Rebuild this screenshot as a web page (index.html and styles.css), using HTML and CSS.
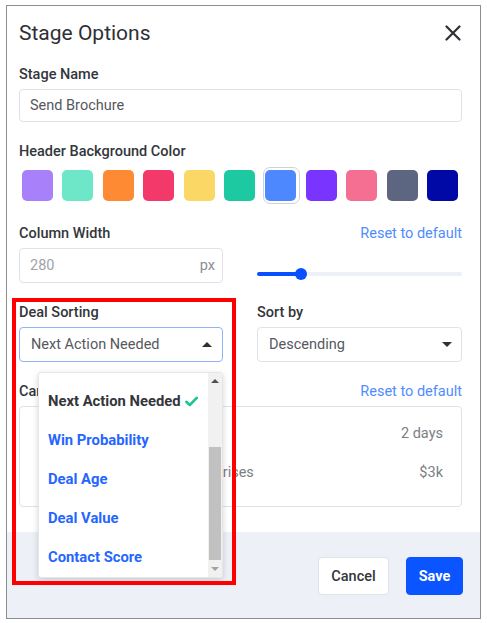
FILE: index.html
```html
<!DOCTYPE html>
<html>
<head>
<meta charset="utf-8">
<link rel="stylesheet" href="styles.css">
</head>
<body>
<div class="frame">
  <div class="modal-body">
    <div class="head">
      <h1 class="title">Stage Options</h1>
      <span class="close">
        <svg width="16" height="16" viewBox="0 0 16 16"><path d="M1.5 1.5 L14.5 14.5 M14.5 1.5 L1.5 14.5" stroke="#2e3035" stroke-width="2.2" stroke-linecap="round" fill="none"/></svg>
      </span>
    </div>

    <div class="field first">
      <div class="label">Stage Name</div>
      <div class="input">Send Brochure</div>
    </div>

    <div class="field">
      <div class="label">Header Background Color</div>
      <div class="swatches">
        <span class="sw"><span class="chip c1"></span></span>
        <span class="sw"><span class="chip c2"></span></span>
        <span class="sw"><span class="chip c3"></span></span>
        <span class="sw"><span class="chip c4"></span></span>
        <span class="sw"><span class="chip c5"></span></span>
        <span class="sw"><span class="chip c6"></span></span>
        <span class="sw selected"><span class="chip c7"></span></span>
        <span class="sw"><span class="chip c8"></span></span>
        <span class="sw"><span class="chip c9"></span></span>
        <span class="sw"><span class="chip c10"></span></span>
        <span class="sw"><span class="chip c11"></span></span>
      </div>
    </div>

    <div class="field">
      <div class="label-row">
        <span class="label">Column Width</span>
        <span class="link">Reset to default</span>
      </div>
      <div class="two-col">
        <div class="input input-px"><span class="placeholder">280</span><span class="unit">px</span></div>
        <div class="slider">
          <div class="track"><div class="fill"></div><div class="thumb"></div></div>
        </div>
      </div>
    </div>

    <div class="field two-col">
      <div class="sub">
        <div class="label">Deal Sorting</div>
        <div class="select focus"><span>Next Action Needed</span><span class="caret up"></span></div>
        <div class="menu">
          <ul class="menu-list">
            <li class="item current">Next Action Needed
              <svg class="check" width="13" height="11" viewBox="0 0 13 11"><path d="M1.3 5.8 L4.8 9 L11.7 1.8" stroke="#22c38e" stroke-width="2.6" fill="none" stroke-linecap="round" stroke-linejoin="round"/></svg>
            </li>
            <li class="item">Win Probability</li>
            <li class="item">Deal Age</li>
            <li class="item">Deal Value</li>
            <li class="item">Contact Score</li>
          </ul>
          <div class="scrollbar">
            <span class="sb-btn"><span class="sb-arrow up"></span></span>
            <span class="sb-space"></span>
            <span class="sb-thumb"></span>
            <span class="sb-fill"></span>
            <span class="sb-btn"><span class="sb-arrow down"></span></span>
          </div>
        </div>
      </div>
      <div class="sub">
        <div class="label">Sort by</div>
        <div class="select"><span>Descending</span><span class="caret down"></span></div>
      </div>
    </div>

    <div class="field">
      <div class="label-row">
        <span class="label">Card Preview</span>
        <span class="link">Reset to default</span>
      </div>
      <div class="card">
        <div class="card-row"><span class="muted"></span><span class="muted">2 days</span></div>
        <div class="card-row"><span class="muted company">Enterprises</span><span class="muted">$3k</span></div>
      </div>
    </div>
  </div>

  <div class="footer">
    <button class="btn">Cancel</button>
    <button class="btn primary">Save</button>
  </div>

  <div class="highlight"></div>
</div>
</body>
</html>
```

FILE: styles.css
```css
* { box-sizing: border-box; }
html, body { margin: 0; padding: 0; background: #ffffff; }
body {
  font-family: Roboto, "Liberation Sans", Arial, sans-serif;
  font-size: 14.5px;
  color: #33363b;
}
.frame {
  position: relative;
  margin: 5px 0 0 6px;
  width: 475px;
  height: 614px;
  border: 1px solid #8d8d8d;
  display: flex;
  flex-direction: column;
  background: #ffffff;
}
.modal-body {
  padding: 15px 18px 25px 12px;
}
.head {
  display: flex;
  justify-content: space-between;
  align-items: flex-start;
}
.title {
  margin: 0;
  font-size: 21px;
  line-height: 24px;
  font-weight: 400;
  color: #2e3035;
}
.close { display: block; width: 16px; height: 16px; margin-top: 4px; margin-right: 1px; }
.close svg { display: block; }

.field { margin-top: 20px; }
.label {
  font-size: 14.5px;
  line-height: 20px;
  font-weight: 500;
  color: #33363b;
  margin-bottom: 4px;
}
.label-row {
  display: flex;
  justify-content: space-between;
  align-items: center;
  margin-bottom: 4px;
}
.label-row .label { margin-bottom: 0; }
.link {
  color: #4f8cff;
  font-size: 14.5px;
  line-height: 20px;
}
.input {
  height: 33px;
  border: 1px solid #dfe2ea;
  border-radius: 4px;
  padding: 0 10px;
  display: flex;
  align-items: center;
  color: #55585e;
}
.input-px { height: 35px; justify-content: space-between; padding-right: 7px; }
.placeholder { color: #a0a3a8; }
.unit { color: #8b8e94; }

.swatches {
  display: flex;
  justify-content: space-between;
  margin-top: 5px;
}
.sw {
  width: 37px;
  height: 37px;
  padding: 1.5px;
  border: 1.5px solid transparent;
  border-radius: 7px;
  display: block;
}
.sw.selected { border-color: #cdd1da; }
.chip { display: block; width: 31px; height: 31px; border-radius: 5px; }
.c1 { background: #a880f9; }
.c2 { background: #6ee7c9; }
.c3 { background: #ff8a34; }
.c4 { background: #f2396a; }
.c5 { background: #fbd865; }
.c6 { background: #1cc9a0; }
.c7 { background: #4e88ff; }
.c8 { background: #7935ff; }
.c9 { background: #f56f93; }
.c10 { background: #5d6680; }
.c11 { background: #0008a6; }

.two-col {
  display: grid;
  grid-template-columns: 204px 205px;
  column-gap: 34px;
}
.slider { padding-top: 20px; }
.track {
  position: relative;
  height: 4px;
  border-radius: 2px;
  background: #edf0f7;
  margin-top: 4px;
}
.fill {
  width: 44px;
  height: 4px;
  border-radius: 2px;
  background: #0a4fff;
}
.thumb {
  position: absolute;
  left: 38px;
  top: -4px;
  width: 12px;
  height: 12px;
  border-radius: 50%;
  background: #0a4fff;
}

.sub { position: relative; }
.select {
  height: 35px;
  border: 1px solid #dfe2ea;
  border-radius: 4px;
  padding: 0 9px 0 11px;
  display: flex;
  align-items: center;
  justify-content: space-between;
  color: #55585e;
}
.select.focus { border-color: #8fb2ff; }
.caret { width: 0; height: 0; border-left: 5px solid transparent; border-right: 5px solid transparent; }
.caret.up { border-bottom: 5px solid #2e3035; margin-right: 1px; }
.caret.down { border-top: 5px solid #2e3035; }

.menu {
  position: absolute;
  z-index: 5;
  left: 19px;
  top: calc(100% + 10px);
  width: 185px;
  height: 206px;
  background: #ffffff;
  border: 1px solid #e4e6ea;
  border-radius: 3px;
  box-shadow: 0 2px 6px rgba(0, 0, 0, 0.16);
  display: flex;
  overflow: hidden;
}
.menu-list {
  list-style: none;
  margin: 0;
  padding: 9px 0 0 9px;
  flex: 1;
}
.item {
  height: 39px;
  line-height: 39px;
  font-size: 14.8px;
  font-weight: 700;
  color: #2466ff;
  white-space: nowrap;
}
.item.current { color: #33363b; }
.check { margin-left: 1px; vertical-align: -1px; }
.scrollbar {
  width: 14px;
  background: #f1f1f1;
  display: flex;
  flex-direction: column;
}
.sb-btn { height: 17px; display: flex; align-items: center; justify-content: center; }
.sb-arrow { width: 0; height: 0; border-left: 4px solid transparent; border-right: 4px solid transparent; }
.sb-arrow.up { border-bottom: 4px solid #505050; }
.sb-arrow.down { border-top: 4px solid #a3a3a3; }
.sb-space { height: 58px; }
.sb-thumb { height: 114px; margin: 0 1px; background: #c1c1c1; }
.sb-fill { flex: 1; }

.card {
  border: 1px solid #dfe2ea;
  border-radius: 4px;
  padding: 17px 18px 23px 18px;
  height: 101px;
}
.card-row {
  display: flex;
  justify-content: space-between;
  line-height: 20px;
}
.card-row + .card-row { margin-top: 19px; }
.muted { color: #7b7e84; }
.company { margin-left: 143px; }

.footer {
  flex: 1;
  background: #edf0f7;
  display: flex;
  justify-content: flex-end;
  align-items: flex-start;
  gap: 17px;
  padding: 25px 17px 0 0;
}
.btn {
  height: 38px;
  border: 1px solid #dfe2ea;
  border-radius: 4px;
  background: #ffffff;
  font-family: Roboto, "Liberation Sans", Arial, sans-serif;
  font-size: 14.5px;
  font-weight: 500;
  color: #33363b;
  padding: 0;
  width: 71px;
}
.btn.primary {
  background: #0a55ff;
  border-color: #0a55ff;
  color: #ffffff;
  font-weight: 700;
  width: 57px;
}

.highlight {
  position: absolute;
  z-index: 6;
  left: 5px;
  top: 292px;
  width: 224px;
  height: 287px;
  border: 4px solid #ff0000;
  pointer-events: none;
}
```
